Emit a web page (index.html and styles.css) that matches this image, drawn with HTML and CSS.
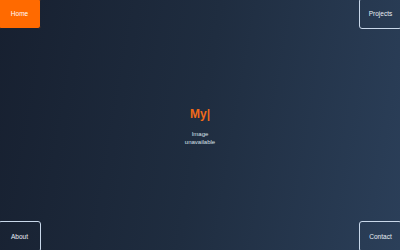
FILE: index.html
```html
<!DOCTYPE html>
<html>
  <head>
    <meta charset="UTF-8">
    <meta name="viewport" content="width=device-width, initial-scale=1">
    <title>Portfolio</title>
    <link rel="stylesheet" href="styles.css">
  </head>
  <body>
    <div class="page">
      <div class="corner-row top">
        <a class="corner-link active" href="#">Home</a>
        <a class="corner-link" href="#">Projects</a>
      </div>
      <div class="hero">
        <h1 class="typed">My<span class="cursor">|</span></h1>
        <div class="photo">Image<br>unavailable</div>
      </div>
      <div class="corner-row bottom">
        <a class="corner-link" href="#">About</a>
        <a class="corner-link" href="#">Contact</a>
      </div>
    </div>
  </body>
</html>
```

FILE: styles.css
```css
html, body {
  margin: 0;
  height: 100%;
  overflow: hidden;
}
body {
  font-family: "Liberation Sans", Arial, sans-serif;
  background: linear-gradient(100deg, #172030 0%, #1f2d40 50%, #2b3f59 100%);
  color: #fff;
}
.page {
  height: 250px;
  display: flex;
  flex-direction: column;
  justify-content: space-between;
}
.corner-row {
  display: flex;
  justify-content: space-between;
  margin: 0 -2px;
}
.corner-row.top {
  margin-top: -2px;
}
.corner-row.bottom {
  margin-bottom: -2px;
}
.corner-link {
  box-sizing: border-box;
  width: 43px;
  height: 31px;
  display: flex;
  align-items: center;
  justify-content: center;
  font-size: 6.5px;
  color: #e8eef5;
  text-decoration: none;
  border: 1px solid #c9d8ea;
  border-radius: 3px;
}
.corner-link.active {
  background: #ff6a00;
  border-color: #1a2231;
  color: #fff;
}
.hero {
  flex: 1;
  display: flex;
  flex-direction: column;
  align-items: center;
  justify-content: center;
  padding-top: 2px;
}
.typed {
  margin: 0;
  font-size: 12px;
  font-weight: bold;
  color: #f06a1a;
  line-height: 14px;
}
.photo {
  margin-top: 9px;
  font-size: 6px;
  line-height: 8px;
  color: #d8e0ea;
  text-align: center;
}
```
